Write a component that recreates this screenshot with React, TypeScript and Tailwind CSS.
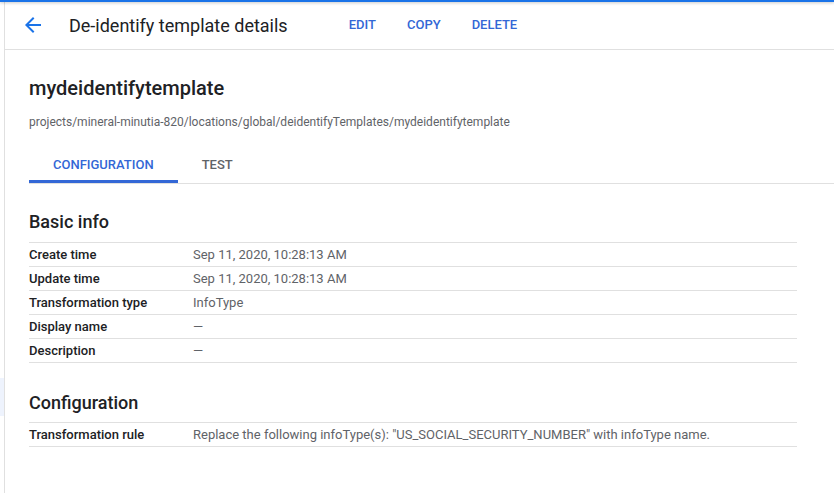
const rows = [
  { label: "Create time", value: "Sep 11, 2020, 10:28:13 AM" },
  { label: "Update time", value: "Sep 11, 2020, 10:28:13 AM" },
  { label: "Transformation type", value: "InfoType" },
  { label: "Display name", value: "—" },
  { label: "Description", value: "—" },
];

function InfoTable({ items }: { items: { label: string; value: string }[] }) {
  return (
    <div className="w-[768px] border-t border-[#e0e0e0]">
      {items.map((r) => (
        <div key={r.label} className="flex h-[24px] items-center border-b border-[#e0e0e0]">
          <div className="w-[164px] text-[13px] font-medium text-[#202124]">{r.label}</div>
          <div className="text-[13px] text-[#5f6368]">{r.value}</div>
        </div>
      ))}
    </div>
  );
}

export default function App() {
  return (
    <div
      className="relative flex h-[493px] w-[834px] overflow-hidden bg-white text-[#202124]"
      style={{ fontFamily: "Roboto, 'Liberation Sans', sans-serif" }}
    >
      <div className="absolute left-0 right-0 top-0 h-[2px] bg-[#1a73e8] shadow-[0_1px_3px_rgba(0,0,0,0.25)]" />

      <div className="w-[4px] shrink-0 pt-[378px]">
        <div className="h-[38px] bg-[#eef3fd]" />
      </div>

      <div className="flex-1 border-l border-[#e0e0e0]">
        <header className="flex h-[50px] items-center border-b border-[#e0e0e0] pl-[16px] pt-[1px]">
          <svg viewBox="0 0 24 24" className="h-6 w-6 fill-[#1a73e8]">
            <path d="M20 11H7.83l5.59-5.59L12 4l-8 8 8 8 1.41-1.41L7.83 13H20v-2z" />
          </svg>
          <h1 className="ml-[24px] text-[18px] text-[#202124]">De-identify template details</h1>
          <div className="ml-[61px] flex gap-[31px] text-[13px] font-medium text-[#3367d6]">
            <span>EDIT</span>
            <span>COPY</span>
            <span>DELETE</span>
          </div>
        </header>

        <main className="pl-[24px]">
          <h2 className="mt-[25px] text-[20px] font-medium leading-[26px]">mydeidentifytemplate</h2>
          <p className="mt-[13px] text-[12px] leading-[16px] text-[#5f6368]">
            projects/mineral-minutia-820/locations/global/deidentifyTemplates/mydeidentifytemplate
          </p>

          <div className="mt-[17px] flex h-[37px] border-b border-[#e0e0e0]">
            <div className="flex items-center border-b-[3px] border-[#3367d6] px-[24px] pt-[3px] text-[13px] font-medium text-[#3367d6]">
              CONFIGURATION
            </div>
            <div className="flex items-center px-[24px] text-[13px] font-medium text-[#5f6368]">
              TEST
            </div>
          </div>

          <h3 className="mt-[26px] mb-[8px] text-[18px] font-medium leading-[24px]">Basic info</h3>
          <InfoTable items={rows} />

          <h3 className="mt-[28px] mb-[7px] text-[18px] font-medium leading-[24px]">Configuration</h3>
          <InfoTable
            items={[
              {
                label: "Transformation rule",
                value:
                  'Replace the following infoType(s): "US_SOCIAL_SECURITY_NUMBER" with infoType name.',
              },
            ]}
          />
        </main>
      </div>
    </div>
  );
}
